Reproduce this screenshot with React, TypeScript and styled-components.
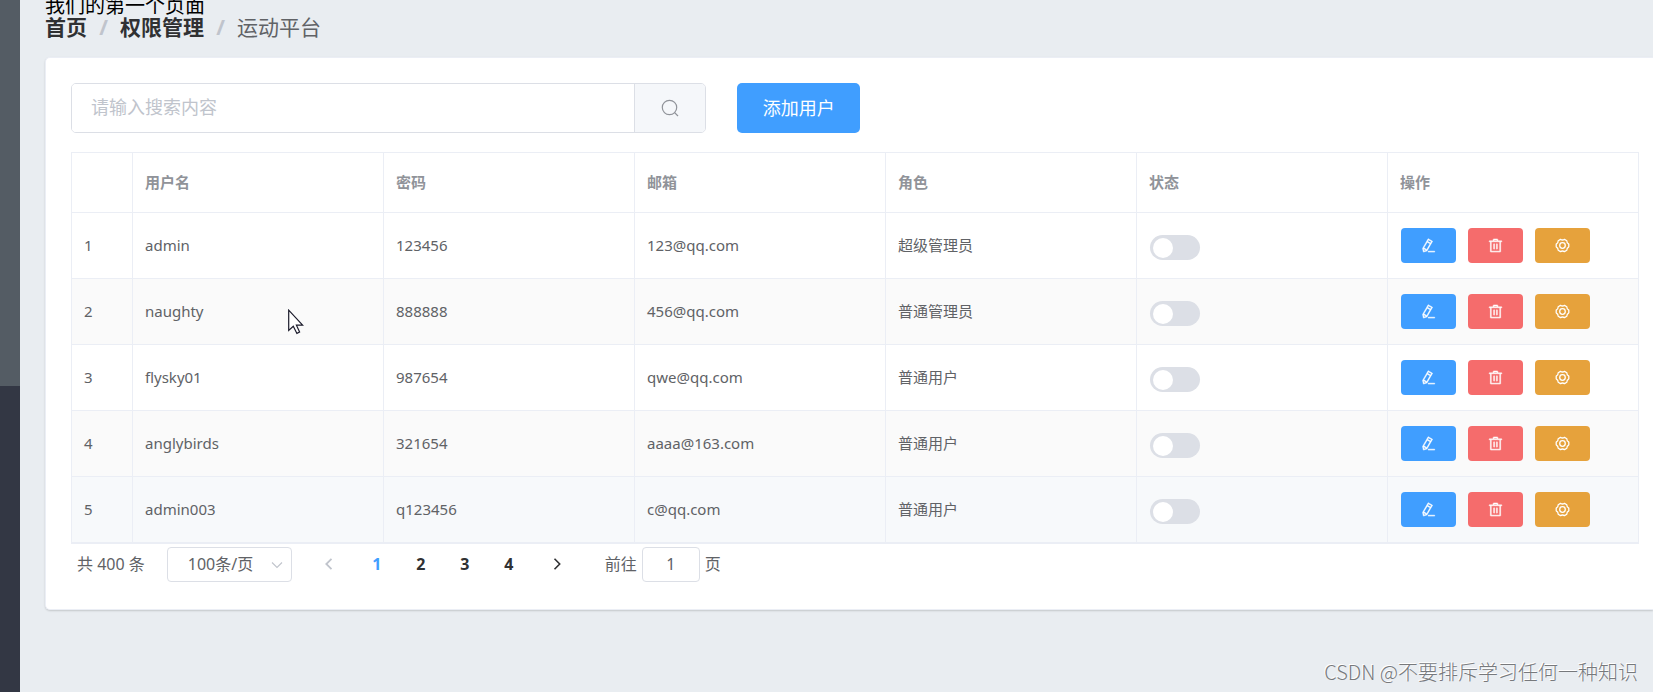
import React, { useState } from 'react';
import styled, { createGlobalStyle } from 'styled-components';

const GlobalStyle = createGlobalStyle`
  *, *::before, *::after { box-sizing: border-box; }
  body { margin: 0; background: #e9edf1; }
  body, button, input, select {
    font-family: "Noto Sans", "Noto Sans CJK SC", sans-serif;
  }
`;

const Page = styled.div`
  position: relative;
  display: flex;
  min-height: 100vh;
  overflow: hidden;
  background: #e9edf1;
`;

const Sidebar = styled.aside`
  flex: none;
  width: 20px;
  background: #333744;
`;

const SideMenu = styled.nav`
  height: 386px;
  background: #545c64;
`;

const Main = styled.main`
  flex: 1;
  min-width: 0;
  padding-left: 25px;
`;

const PageTitle = styled.div`
  height: 22px;
  margin-top: -5px;
  font-size: 20px;
  line-height: 22px;
  color: #000;
`;

const Breadcrumb = styled.nav`
  display: flex;
  height: 20px;
  font-size: 21px;
  line-height: 20px;
  color: #606266;
`;

const Crumb = styled.a`
  color: #303133;
  font-weight: 700;
  text-decoration: none;
`;

const Slash = styled.span`
  width: 33px;
  text-align: center;
  font-weight: 700;
  color: #c0c4cc;
`;

const Card = styled.section`
  margin-top: 20px;
  padding: 25px 14px 25px 25px;
  border: 1px solid #ebeef5;
  border-right: none;
  border-radius: 5px 0 0 5px;
  background: #fff;
  box-shadow: 0 1px 2px rgba(0, 0, 0, 0.16);
`;

const Toolbar = styled.div`
  display: grid;
  grid-template-columns: repeat(24, 1fr);
  column-gap: 31px;
  margin-bottom: 19px;
`;

const SearchBox = styled.div`
  grid-column: span 10;
  display: flex;
  height: 50px;
  border: 1px solid #dcdfe6;
  border-radius: 5px;
  overflow: hidden;
`;

const SearchInput = styled.input`
  flex: 1;
  min-width: 0;
  padding: 0 19px 2px;
  border: none;
  outline: none;
  font-size: 18px;
  color: #606266;
  &::placeholder { color: #c0c4cc; opacity: 1; }
`;

const SearchButton = styled.button`
  display: flex;
  align-items: center;
  justify-content: center;
  width: 71px;
  border: none;
  border-left: 1px solid #dcdfe6;
  background: #f5f7fa;
  color: #909399;
`;

const AddButton = styled.button`
  grid-column: span 4;
  justify-self: start;
  width: 123px;
  height: 50px;
  padding: 0 0 2px;
  border: none;
  border-radius: 5px;
  background: #409eff;
  color: #fff;
  font-size: 18px;
`;

const TableFrame = styled.div`
  border: solid #ebeef5;
  border-width: 1px 0 1px 1px;
`;

const Table = styled.table`
  width: 100%;
  table-layout: fixed;
  border-collapse: separate;
  border-spacing: 0;
  font-size: 15px;
  line-height: 22px;
  color: #606266;
`;

const IndexCol = styled.col`
  width: 61px;
`;

const HeadCell = styled.th`
  height: 60px;
  padding: 0 12px 2px;
  border: solid #ebeef5;
  border-width: 0 1px 1px 0;
  text-align: left;
  font-weight: 700;
  color: #909399;
`;

const Cell = styled.td`
  height: 66px;
  padding: 0 12px 2px;
  border: solid #ebeef5;
  border-width: 0 1px 1px 0;
`;

const ControlCell = styled(Cell)`
  padding: 0 12px 0 13px;
`;

const Row = styled.tr<{ $tone: string }>`
  background: ${(p) => p.$tone};
`;

const Switch = styled.input`
  display: block;
  appearance: none;
  width: 50px;
  height: 25px;
  margin: 3px 0 0;
  padding: 3px;
  border-radius: 13px;
  background: #dcdfe6;
  &::before {
    content: "";
    display: block;
    width: 20px;
    height: 20px;
    border-radius: 50%;
    background: #fff;
  }
  &:checked { background: #409eff; }
  &:checked::before { margin-left: 24px; }
`;

const Actions = styled.div`
  display: flex;
  gap: 12px;
`;

const ActionButton = styled.button<{ $color: string }>`
  display: flex;
  align-items: center;
  justify-content: center;
  width: 55px;
  height: 35px;
  padding: 0;
  border: none;
  border-radius: 4px;
  background: ${(p) => p.$color};
  color: #fff;
`;

const Pagination = styled.div`
  display: flex;
  align-items: center;
  padding: 3px 6px 2px;
  font-size: 16px;
  line-height: 24px;
  color: #606266;
`;

const PageText = styled.span`
  padding-bottom: 2px;
`;

const SizeField = styled.div`
  position: relative;
  margin: 0 15px 0 22px;
  color: #c0c4cc;
  svg {
    position: absolute;
    right: 9px;
    top: 12px;
    pointer-events: none;
  }
`;

const SizeSelect = styled.select`
  appearance: none;
  display: block;
  width: 125px;
  height: 35px;
  padding: 0 20px 2px;
  border: 1px solid #dcdfe6;
  border-radius: 4px;
  background: #fff;
  font-size: 16px;
  color: #606266;
`;

const Pager = styled.div`
  display: flex;
  margin: 0 4px;
`;

const PageButton = styled.button<{ $active?: boolean; $muted?: boolean }>`
  display: flex;
  align-items: center;
  justify-content: center;
  width: 44px;
  height: 35px;
  padding: 0 0 2px;
  border: none;
  background: transparent;
  font-size: 16px;
  font-weight: 700;
  color: ${(p) => (p.$active ? '#409eff' : p.$muted ? '#c0c4cc' : '#303133')};
`;

const Jump = styled.label`
  display: flex;
  align-items: center;
  gap: 5px;
  margin-left: 26px;
`;

const JumpInput = styled.input`
  width: 58px;
  height: 35px;
  padding: 0 4px 2px;
  border: 1px solid #dcdfe6;
  border-radius: 4px;
  text-align: center;
  font-size: 16px;
  color: #606266;
`;

const Watermark = styled.div`
  position: absolute;
  right: 15px;
  bottom: 5px;
  font-family: "Noto Sans CJK SC", sans-serif;
  font-size: 20px;
  font-weight: 300;
  line-height: 30px;
  color: #77797c;
  text-shadow: -1px -1px 0 #fff;
`;

const Pointer = styled.svg`
  position: absolute;
  left: 288px;
  top: 309px;
  pointer-events: none;
`;

const Glyph = ({ children }: { children: React.ReactNode }) => (
  <svg width="15" height="15" viewBox="0 0 1024 1024" fill="currentColor" aria-hidden="true">
    {children}
  </svg>
);

const EditIcon = () => (
  <Glyph>
    <path d="m199.04 672.64 193.984 112 224-387.968-193.92-112-224 388.032zm-23.872 60.16 32.896 148.288 144.896-45.696zM455.04 229.248l193.92 112 56.704-98.112-193.984-112zM104.32 708.8l384-665.024 304.768 175.936L409.152 884.8h.064l-248.448 78.336zm384 254.272v-64h448v64z" stroke="currentColor" strokeWidth="32" />
  </Glyph>
);

const DeleteIcon = () => (
  <Glyph>
    <path d="M160 256H96a32 32 0 0 1 0-64h256V95.936a32 32 0 0 1 32-32h256a32 32 0 0 1 32 32V192h256a32 32 0 1 1 0 64h-64v672a32 32 0 0 1-32 32H192a32 32 0 0 1-32-32zm448-64v-64H416v64zM224 896h576V256H224zm192-128a32 32 0 0 1-32-32V416a32 32 0 0 1 64 0v320a32 32 0 0 1-32 32m192 0a32 32 0 0 1-32-32V416a32 32 0 0 1 64 0v320a32 32 0 0 1-32 32" stroke="currentColor" strokeWidth="32" />
  </Glyph>
);

const SettingIcon = () => (
  <Glyph>
    <g fill="none" stroke="currentColor" strokeWidth="88" strokeLinejoin="round">
      <path d="M942 421L942 603Q798 677 806 839L648 930Q512 842 376 930L218 839Q226 677 82 603L82 421Q226 347 218 185L376 94Q512 182 648 94L806 185Q798 347 942 421Z" />
      <circle cx="512" cy="512" r="190" />
    </g>
  </Glyph>
);

const SearchIcon = () => (
  <svg width="18" height="18" viewBox="0 0 18 18" fill="none" stroke="currentColor" strokeWidth="1.2" aria-hidden="true">
    <circle cx="8.5" cy="8.5" r="7.2" />
    <path d="M13.6 13.6 17 17" />
  </svg>
);

const Chevron = ({ d, weight }: { d: string; weight: number }) => (
  <svg width="12" height="12" viewBox="0 0 12 12" fill="none" stroke="currentColor" strokeWidth={weight} aria-hidden="true">
    <path d={d} />
  </svg>
);

const users = [
  { name: 'admin', password: '123456', email: '123@qq.com', role: '超级管理员', tone: '#fff' },
  { name: 'naughty', password: '888888', email: '456@qq.com', role: '普通管理员', tone: '#fafafa' },
  { name: 'flysky01', password: '987654', email: 'qwe@qq.com', role: '普通用户', tone: '#fff' },
  { name: 'anglybirds', password: '321654', email: 'aaaa@163.com', role: '普通用户', tone: '#fafafa' },
  { name: 'admin003', password: 'q123456', email: 'c@qq.com', role: '普通用户', tone: '#f7f9fb' },
];

const headings = ['', '用户名', '密码', '邮箱', '角色', '状态', '操作'];

export default function App() {
  const [page, setPage] = useState(1);

  return (
    <Page>
      <GlobalStyle />
      <Sidebar>
        <SideMenu />
      </Sidebar>
      <Main>
        <PageTitle>我们的第一个页面</PageTitle>
        <Breadcrumb>
          <Crumb href="#home">首页</Crumb>
          <Slash>/</Slash>
          <Crumb href="#rights">权限管理</Crumb>
          <Slash>/</Slash>
          <span>运动平台</span>
        </Breadcrumb>
        <Card>
          <Toolbar>
            <SearchBox>
              <SearchInput type="text" placeholder="请输入搜索内容" aria-label="搜索" />
              <SearchButton type="button" aria-label="搜索">
                <SearchIcon />
              </SearchButton>
            </SearchBox>
            <AddButton type="button">添加用户</AddButton>
          </Toolbar>
          <TableFrame>
            <Table>
              <colgroup>
                <IndexCol />
                <col span={6} />
              </colgroup>
              <thead>
                <tr>
                  {headings.map((h, i) => (
                    <HeadCell key={i}>{h}</HeadCell>
                  ))}
                </tr>
              </thead>
              <tbody>
                {users.map((u, i) => (
                  <Row key={u.name} $tone={u.tone}>
                    <Cell>{i + 1}</Cell>
                    <Cell>{u.name}</Cell>
                    <Cell>{u.password}</Cell>
                    <Cell>{u.email}</Cell>
                    <Cell>{u.role}</Cell>
                    <ControlCell>
                      <Switch type="checkbox" role="switch" aria-label="状态" />
                    </ControlCell>
                    <ControlCell>
                      <Actions>
                        <ActionButton type="button" $color="#409eff" aria-label="编辑">
                          <EditIcon />
                        </ActionButton>
                        <ActionButton type="button" $color="#f56c6c" aria-label="删除">
                          <DeleteIcon />
                        </ActionButton>
                        <ActionButton type="button" $color="#e6a23c" aria-label="设置">
                          <SettingIcon />
                        </ActionButton>
                      </Actions>
                    </ControlCell>
                  </Row>
                ))}
              </tbody>
            </Table>
          </TableFrame>
          <Pagination>
            <PageText>共 400 条</PageText>
            <SizeField>
              <SizeSelect aria-label="每页条数" defaultValue="100">
                <option value="100">100条/页</option>
                <option value="200">200条/页</option>
              </SizeSelect>
              <Chevron d="M1 3.5 6 8.5 11 3.5" weight={1.1} />
            </SizeField>
            <PageButton type="button" $muted={page === 1} aria-label="上一页" onClick={() => setPage(Math.max(1, page - 1))}>
              <Chevron d="M8.5 0.8 3.3 6 8.5 11.2" weight={1.8} />
            </PageButton>
            <Pager>
              {[1, 2, 3, 4].map((n) => (
                <PageButton key={n} type="button" $active={n === page} onClick={() => setPage(n)}>
                  {n}
                </PageButton>
              ))}
            </Pager>
            <PageButton type="button" $muted={page === 4} aria-label="下一页" onClick={() => setPage(Math.min(4, page + 1))}>
              <Chevron d="M3.5 0.8 8.7 6 3.5 11.2" weight={1.6} />
            </PageButton>
            <Jump>
              <PageText>前往</PageText>
              <JumpInput type="text" defaultValue="1" />
              <PageText>页</PageText>
            </Jump>
          </Pagination>
        </Card>
      </Main>
      <Pointer width="17" height="26" viewBox="0 0 17 26" aria-hidden="true">
        <path d="M.7 1.2V21.5L5.3 17.3 8.9 24.4 11.6 23 8.4 16.2H14.6Z" fill="#fff" stroke="#1b1b2b" strokeWidth="1.2" />
      </Pointer>
      <Watermark>CSDN @不要排斥学习任何一种知识</Watermark>
    </Page>
  );
}
